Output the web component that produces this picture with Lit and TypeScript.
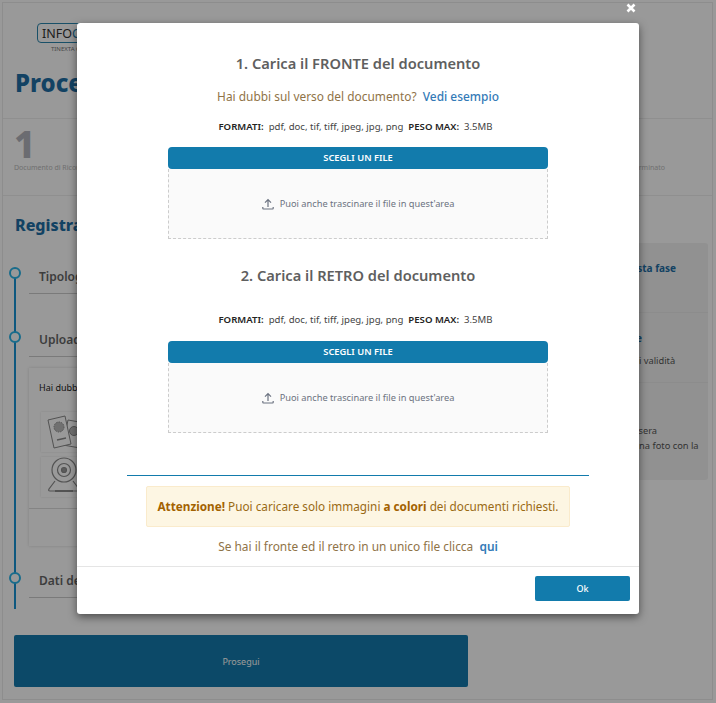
import { LitElement, html, css } from "lit";
import { customElement } from "lit/decorators.js";

const uploadIcon = html`<svg class="up" viewBox="0 0 12 12" width="12" height="12" fill="none" stroke="#6b7280" stroke-width="1.2"><path d="M6 9V1.800M3 4.600 6 1.600l3 3"/><path d="M.8 9v1.300q0 .7.7.7h9q.7 0 .7-.7V9" /></svg>`;

@customElement("app-root")
export class AppRoot extends LitElement {
  static styles = css`
    :host {
      display: block;
      position: relative;
      width: 716px;
      height: 703px;
      overflow: hidden;
      background: #fff;
      font-family: "Noto Sans", "Open Sans", sans-serif;
      color: #444;
    }
    .page {
      height: 698px;
      margin: 2px 3px 0 2px;
      border: 1px solid #ececec;
      box-sizing: border-box;
      display: flex;
      flex-direction: column;
    }
    .logo-row { height: 61px; flex: none; padding: 20px 0 0 34px; box-sizing: border-box; display: flex; flex-direction: column; align-items: flex-start; }
    .logo {
      width: 64px; height: 20px; border: 1.5px solid #2a86ad; border-radius: 4px;
      font-size: 12.500px; line-height: 19px; padding-left: 4px; color: #333; box-sizing: border-box;
    }
    .logo b { font-weight: 400; color: #1c7fb0; }
    .tag { font-size: 6px; line-height: 8px; color: #777; margin: 2px 0 0 14px; white-space: nowrap; }
    h1 { margin: 0 0 16px; padding: 0 0 0 12px; flex: none; font-size: 24px; line-height: 38px; height: 38px; color: #1e6ea5; font-weight: 800; white-space: nowrap; }
    .steps {
      height: 78px; flex: none; border-top: 1px solid #eee; border-bottom: 1px solid #eee;
      display: flex; justify-content: space-between; padding: 7px 47px 0 11px; box-sizing: border-box;
    }
    .step .n { font-size: 37px; font-weight: 800; line-height: 36px; color: #b3b5bd; height: 36px; }
    .step .l { font-size: 7px; color: #bbb; line-height: 12px; white-space: nowrap; }
    .step.last .n { visibility: hidden; }
    h2 { margin: 18px 0 0; padding-left: 12px; flex: none; font-size: 16px; line-height: 22px; height: 22px; color: #1e6ea5; font-weight: 800; white-space: nowrap; }
    .main { display: flex; flex: 1; min-height: 0; }
    .left { width: 465px; flex: none; position: relative; padding: 23px 0 0 26px; box-sizing: border-box; }
    .rail { position: absolute; left: 11px; top: 37px; height: 336px; width: 2px; background: #1893d4; }
    .dot { position: absolute; left: -5px; width: 12px; height: 12px; border: 2.500px solid #2ab4e8; border-radius: 50%; background: #fff; box-sizing: border-box; }
    .row { height: 35px; border-bottom: 1px solid #ccc; font-size: 12px; font-weight: 600; line-height: 36px; padding-left: 10px; color: #666; box-sizing: border-box; white-space: nowrap; }
    .row.second { margin-top: 28px; }
    .row.third { margin-top: 17px; }
    .panel {
      margin-top: 11px; height: 178px; box-sizing: border-box;
      background: #fff; box-shadow: 0 0 3px rgba(0,0,0,0.15);
      font-size: 9px; line-height: 14px; padding-top: 13px; color: #222;
    }
    .panel .q { padding-left: 10px; }
    .tiles { display: flex; flex-direction: column; gap: 5px; margin: 17px 0 11px 12px; }
    .tile { width: 100px; height: 40px; background: #fff; box-shadow: 0 0 2px rgba(0,0,0,0.12); }
    .tile svg { display: block; }
    .sep { border-top: 1px solid #ddd; }
    .side {
      margin: 7px 0 0 12px; width: 228px; height: 237px; background: #f2f2f2; border-radius: 3px;
      display: flex; flex-direction: column; flex: none; padding-left: 12px; box-sizing: border-box;
      font-size: 9.300px; line-height: 15px; color: #555; white-space: nowrap;
    }
    .b { height: 70px; flex: none; border-bottom: 1px solid #e9e9e9; padding-top: 18px; box-sizing: border-box; }
    .b.end { border: 0; padding-top: 40px; height: 97px; }
    .b strong { display: block; color: #1e6ea5; font-size: 10px; line-height: 14px; font-weight: 700; margin-bottom: 8px; }
    .b strong.fit { width: 150px; text-align: right; }
    .submit {
      margin: 0 0 12px 11px; width: 454px; height: 52px; flex: none; border-radius: 2px; background: #147bad;
      color: #fff; font-size: 9px; display: flex; align-items: center; justify-content: center;
    }
    .scrim { position: absolute; inset: 0; background: rgba(0,0,0,0.4); }
    .close { position: absolute; left: 625px; top: 1px; width: 12px; height: 14px; }
    .modal {
      position: absolute; left: 77px; top: 23px; width: 562px; height: 591px;
      background: #fff; border-radius: 3px; box-shadow: 0 3px 9px rgba(0,0,0,0.5);
      display: flex; flex-direction: column;
    }
    .body { flex: 1; display: flex; flex-direction: column; align-items: center; padding: 30px 50px 0; border-bottom: 1px solid #e5e5e5; }
    h3 { margin: 0; font-size: 14.650px; line-height: 20px; font-weight: 600; color: #5f5f5f; white-space: nowrap; }
    .hint { margin-top: 13px; font-size: 11.900px; line-height: 20px; color: #8f7347; height: 20px; }
    a { color: #337ab7; font-weight: 500; text-decoration: none; }
    .fmt { margin-top: 13px; height: 15px; padding-right: 5px; font-size: 9.600px; line-height: 15px; color: #444; white-space: pre; }
    .fmt b { font-weight: 600; color: #222; }
    .pick {
      margin-top: 13px; width: 380px; height: 22px; background: #127bac; border-radius: 4px;
      color: #fff; font-size: 9.300px; font-weight: 600; line-height: 22px; text-align: center;
    }
    .drop {
      width: 380px; height: 70px; box-sizing: border-box; background: #fafafa; border: 1px dashed #ccc; border-top: 0;
      display: flex; align-items: center; justify-content: center; gap: 6px; font-size: 9.250px; color: #6b7280;
    }
    .second-title { margin-top: 26px; }
    .fmt.gap { margin-top: 27px; }
    .fmt.gap + .pick { margin-top: 14px; }
    hr { width: 462px; border: 0; border-top: 1px solid #127bac; margin: 42px 0 0; }
    .alert {
      margin-top: 10px; box-sizing: border-box; width: 424px; height: 41px; border: 1px solid #faebcc; border-radius: 2px;
      background: #fdf6e3; color: #9a6a14; font-size: 11.750px; line-height: 39px; text-align: center; white-space: nowrap;
    }
    .alert b { color: #a36200; font-weight: 700; }
    .single { margin-top: 9px; font-size: 11.900px; line-height: 20px; color: #8f7347; }
    .single a { font-weight: 600; }
    .foot { height: 47px; flex: none; display: flex; align-items: flex-start; justify-content: flex-end; padding: 9px 9px 0 0; box-sizing: border-box; }
    .ok { width: 95px; height: 25px; background: #127bac; border-radius: 2px; color: #fff; font-size: 9px; font-weight: 500; line-height: 25px; text-align: center; }
  `;

  render() {
    return html`
      <div class="page">
        <div class="logo-row">
          <div class="logo">INFO<b>CERT</b></div>
          <div class="tag">TINEXTA GROUP</div>
        </div>
        <h1>Procedura di Registrazione</h1>
        <div class="steps">
          <div class="step"><div class="n">1</div><div class="l">Documento di Riconoscimento</div></div>
          <div class="step last"><div class="n">4</div><div class="l">Processo terminato</div></div>
        </div>
        <h2>Registrazione</h2>
        <div class="main">
          <div class="left">
            <div class="rail">
              <span class="dot" style="top:-6px"></span>
              <span class="dot" style="top:58px"></span>
              <span class="dot" style="top:299px"></span>
            </div>
            <div class="row">Tipologia di documento</div>
            <div class="row second">Upload del documento</div>
            <div class="panel">
              <div class="q">Hai dubbi sul documento?</div>
              <div class="tiles">
                <div class="tile">
                  <svg width="60" height="40" viewBox="0 0 60 40" fill="none" stroke="#8a8a8a" stroke-width="1"><path d="M27 8l17 3-5 25-17-3z" fill="#fff"/><circle cx="33" cy="19" r="4.500" fill="#bbb"/><path d="M7 8 24 4 30 32 13 36z" fill="#fff"/><circle cx="18" cy="15" r="5" fill="#bbb" stroke-dasharray="1.500 1"/><path d="M16 28l9-2" stroke-width="1.400"/></svg>
                </div>
                <div class="tile">
                  <svg width="60" height="40" viewBox="0 0 60 40" fill="none" stroke="#8a8a8a" stroke-width="1.200"><circle cx="23" cy="13" r="12"/><circle cx="23" cy="13" r="6.500"/><circle cx="23" cy="13" r="2.500" fill="#999"/><path d="M14 24 8 32q-1 2 1 2h28q2 0 1-2l-6-8"/><path d="M14 34h18" stroke-width="2"/></svg>
                </div>
              </div>
              <div class="sep"></div>
            </div>
            <div class="row third">Dati del documento</div>
          </div>
          <div class="side">
            <div class="b"><strong>Documenti necessari per questa fase</strong></div>
            <div class="b"><strong class="fit">Scansione del documento e</strong>Deve ora essere ancora in corso di validità</div>
            <div class="b end">Carta d'identità, il passaporto, tessera<br />ministeriali, purché contengano una foto con la</div>
          </div>
        </div>
        <div class="submit">Prosegui</div>
      </div>

      <div class="scrim"></div>
      <svg class="close" viewBox="0 0 12 14" fill="none" stroke="#fff" stroke-width="2.600"><path d="M2.500 3.500 9.500 10.500M9.500 3.500 2.500 10.500"/></svg>

      <div class="modal">
        <div class="body">
          <h3>1. Carica il FRONTE del documento</h3>
          <div class="hint">Hai dubbi sul verso del documento?&nbsp; <a>Vedi esempio</a></div>
          <div class="fmt"><b>FORMATI:</b>  pdf, doc, tif, tiff, jpeg, jpg, png  <b>PESO MAX:</b>  3.5MB</div>
          <div class="pick">SCEGLI UN FILE</div>
          <div class="drop">${uploadIcon}<span>Puoi anche trascinare il file in quest'area</span></div>
          <h3 class="second-title">2. Carica il RETRO del documento</h3>
          <div class="fmt gap"><b>FORMATI:</b>  pdf, doc, tif, tiff, jpeg, jpg, png  <b>PESO MAX:</b>  3.5MB</div>
          <div class="pick">SCEGLI UN FILE</div>
          <div class="drop">${uploadIcon}<span>Puoi anche trascinare il file in quest'area</span></div>
          <hr />
          <div class="alert"><b>Attenzione!</b> Puoi caricare solo immagini <b>a colori</b> dei documenti richiesti.</div>
          <div class="single">Se hai il fronte ed il retro in un unico file clicca&nbsp; <a>qui</a></div>
        </div>
        <div class="foot"><div class="ok">Ok</div></div>
      </div>
    `;
  }
}
